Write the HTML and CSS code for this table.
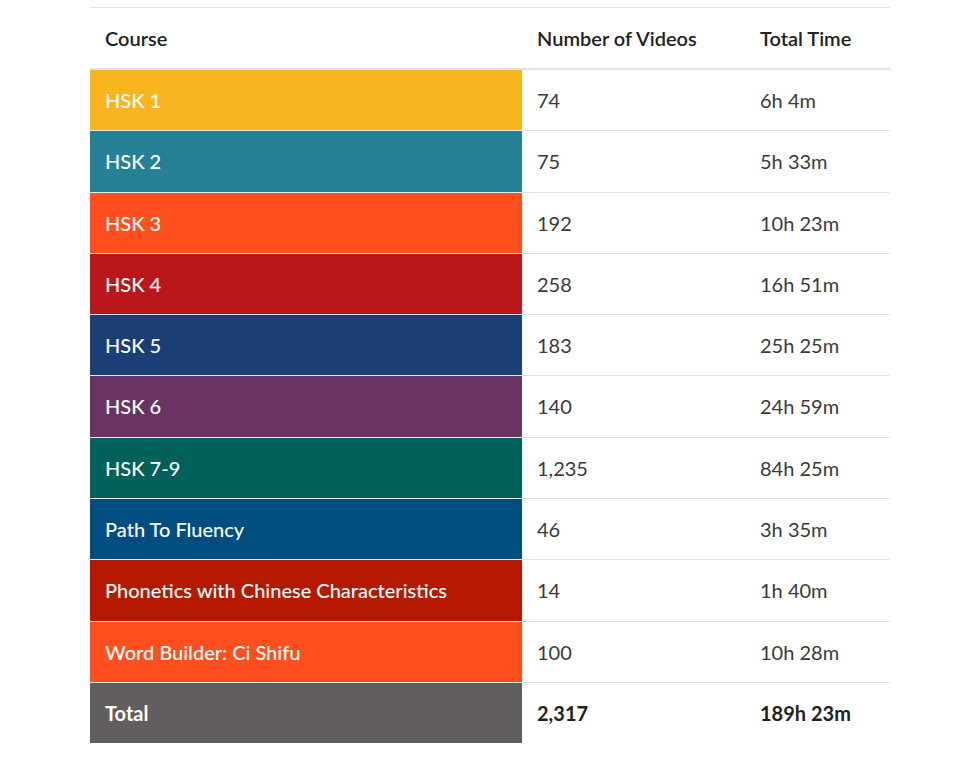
FILE: index.html
```html
<!DOCTYPE html>
<html>
<head>
<meta charset="utf-8">
<link rel="stylesheet" href="styles.css">
</head>
<body>
<div class="wrap">
<table class="courses">
  <thead>
    <tr><th class="c1">Course</th><th class="c2">Number of Videos</th><th class="c3">Total Time</th></tr>
  </thead>
  <tbody>
    <tr><td class="name hsk1">HSK 1</td><td>74</td><td>6h 4m</td></tr>
    <tr><td class="name hsk2">HSK 2</td><td>75</td><td>5h 33m</td></tr>
    <tr><td class="name hsk3">HSK 3</td><td>192</td><td>10h 23m</td></tr>
    <tr><td class="name hsk4">HSK 4</td><td>258</td><td>16h 51m</td></tr>
    <tr><td class="name hsk5">HSK 5</td><td>183</td><td>25h 25m</td></tr>
    <tr><td class="name hsk6">HSK 6</td><td>140</td><td>24h 59m</td></tr>
    <tr><td class="name hsk7">HSK 7-9</td><td>1,235</td><td>84h 25m</td></tr>
    <tr><td class="name ptf">Path To Fluency</td><td>46</td><td>3h 35m</td></tr>
    <tr><td class="name phon">Phonetics with Chinese Characteristics</td><td>14</td><td>1h 40m</td></tr>
    <tr><td class="name wb">Word Builder: Ci Shifu</td><td>100</td><td>10h 28m</td></tr>
    <tr class="total"><td class="name tot">Total</td><td>2,317</td><td>189h 23m</td></tr>
  </tbody>
</table>
</div>
</body>
</html>
```
FILE: styles.css
```css
html, body {
  margin: 0;
  padding: 0;
  background: #fff;
}
body {
  font-family: Lato, "Open Sans", sans-serif;
  font-size: 20px;
  color: #3a3a3a;
}
.wrap {
  padding: 7px 64px 0 90px;
}
.courses {
  width: 800px;
  border-collapse: collapse;
  border-top: 1px solid #e3e3e3;
}
.courses th {
  text-align: left;
  font-weight: 600;
  color: #222;
  padding: 15px 15px;
  line-height: 30px;
  border-bottom: 2px solid #dee2e6;
}
.courses .c1 { width: 402px; }
.courses .c2 { width: 193px; }
.courses td {
  padding: 15px 15px;
  line-height: 30.3px;
  border-top: 1px solid #dee2e6;
  vertical-align: middle;
}
.courses td.name {
  color: #fff;
  font-weight: 500;
  border-top: 1px solid #e8e8e8;
}
.courses tbody tr:first-child td { border-top: none; }
.total td { font-weight: 700; color: #222; }
.total td.name { font-weight: 700; color: #fff; }
.hsk1 { background: #f8b520; }
.hsk2 { background: #268197; }
.hsk3 { background: #ff4f1f; }
.hsk4 { background: #b9171b; }
.hsk5 { background: #1c3e76; }
.hsk6 { background: #693464; }
.hsk7 { background: #00605a; }
.ptf { background: #004e80; }
.phon { background: #b51a00; }
.wb { background: #ff4f1f; }
.tot { background: #625e5e; }
```
